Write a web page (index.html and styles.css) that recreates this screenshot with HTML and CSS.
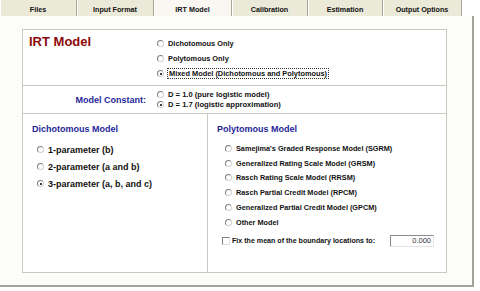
FILE: index.html
```html
<!DOCTYPE html>
<html lang="en">
<head>
    <meta charset="UTF-8">
    <title>IRT Model</title>
    <link rel="stylesheet" href="styles.css">
</head>
<body>
    <div class="tabs">
        <div class="tab">Files</div>
        <div class="tab">Input Format</div>
        <div class="tab active">IRT Model</div>
        <div class="tab">Calibration</div>
        <div class="tab">Estimation</div>
        <div class="tab">Output Options</div>
    </div>

    <div class="page">
        <div class="panel">
            <!-- model type -->
            <div class="sec-model">
                <div class="title">IRT Model</div>
                <div class="opts">
                    <div class="opt"><span class="radio"></span>Dichotomous Only</div>
                    <div class="opt"><span class="radio"></span>Polytomous Only</div>
                    <div class="opt"><span class="radio on"></span><span class="focus">Mixed Model (Dichotomous and Polytomous)</span></div>
                </div>
            </div>

            <!-- model constant -->
            <div class="sec-const">
                <div class="const-label">Model Constant:</div>
                <div class="opts">
                    <div class="opt"><span class="radio"></span>D = 1.0 (pure logistic model)</div>
                    <div class="opt"><span class="radio on"></span>D = 1.7 (logistic approximation)</div>
                </div>
            </div>

            <div class="sec-split">
                <div class="col-left">
                    <div class="head">Dichotomous Model</div>
                    <div class="list">
                        <div class="opt"><span class="radio"></span>1-parameter (b)</div>
                        <div class="opt"><span class="radio"></span>2-parameter (a and b)</div>
                        <div class="opt"><span class="radio on"></span>3-parameter (a, b, and c)</div>
                    </div>
                </div>
                <div class="col-right">
                    <div class="head">Polytomous Model</div>
                    <div class="list">
                        <div class="opt"><span class="radio"></span>Samejima's Graded Response Model (SGRM)</div>
                        <div class="opt"><span class="radio"></span>Generalized Rating Scale Model (GRSM)</div>
                        <div class="opt"><span class="radio"></span>Rasch Rating Scale Model (RRSM)</div>
                        <div class="opt"><span class="radio"></span>Rasch Partial Credit Model (RPCM)</div>
                        <div class="opt"><span class="radio"></span>Generalized Partial Credit Model (GPCM)</div>
                        <div class="opt"><span class="radio"></span>Other Model</div>
                    </div>
                    <div class="fix">
                        <span class="check"></span>Fix the mean of the boundary locations to:
                        <div class="field">0.000</div>
                    </div>
                </div>
            </div>
        </div>
    </div>
</body>
</html>
```

FILE: styles.css
```css
* {
    box-sizing: border-box;
}
body {
    margin: 0;
    width: 480px;
    height: 291px;
    overflow: hidden;
    background: #fff;
    font-family: "Liberation Sans", Arial, sans-serif;
    font-weight: bold;
    color: #111;
}
.tabs {
    display: grid;
    grid-template-columns: 77px 77px 78px 76px 75px 79px;
    height: 16px;
}
.tab {
    background: #ebe9d8;
    border-right: 1px solid #a8a694;
    box-shadow: inset 1px 0 0 #fff;
    font-size: 7.2px;
    display: flex;
    align-items: center;
    justify-content: center;
    padding-top: 2px;
}
.tab.active {
    background: #f8f7f1;
}
.page {
    width: 474px;
    height: 271px;
    border-right: 2px solid #a3a39b;
    border-bottom: 2px solid #a3a39b;
    background: #fcfcf8;
    padding: 13px 0 0 22px;
}
.panel {
    width: 425px;
    height: 244px;
    border: 1px solid #c9c9c1;
    background: #fff;
    display: flex;
    flex-direction: column;
}
.sec-model {
    display: flex;
    height: 56px;
    border-bottom: 1px solid #c9c9c1;
}
.title {
    width: 134px;
    padding: 4px 0 0 6px;
    font-size: 13px;
    line-height: 15px;
    color: #8c0a0a;
}
.sec-model .opts {
    padding-top: 6px;
}
.opt {
    display: flex;
    align-items: center;
    height: 15px;
    font-size: 7.4px;
    white-space: nowrap;
}
.radio {
    width: 7px;
    height: 7px;
    flex: none;
    border-radius: 50%;
    border: 1px solid;
    border-color: #7f7f7f #d2d2d2 #d2d2d2 #7f7f7f;
    background: #fff;
    margin-right: 4px;
    display: flex;
    align-items: center;
    justify-content: center;
}
.radio.on::after {
    content: '';
    width: 2px;
    height: 2px;
    border-radius: 50%;
    background: #000;
}
.focus {
    outline: 1px dotted #333;
    padding: 0 1px;
    line-height: 9px;
}
.sec-const {
    display: flex;
    align-items: center;
    height: 28px;
    border-bottom: 1px solid #c9c9c1;
}
.const-label {
    width: 134px;
    text-align: right;
    padding-right: 11px;
    font-size: 9px;
    color: #1f1f99;
}
.sec-const .opt {
    height: 10px;
    font-size: 7.6px;
}
.sec-split {
    display: flex;
    flex: 1;
}
.col-left {
    width: 185px;
    border-right: 1px solid #c9c9c1;
    padding: 9px 0 0 9px;
}
.col-right {
    flex: 1;
    padding: 9px 12px 0 9px;
}
.head {
    font-size: 9px;
    line-height: 12px;
    color: #1f1f99;
}
.list {
    margin-top: 6px;
}
.col-left .list {
    padding-left: 5px;
}
.col-left .opt {
    height: 17px;
    font-size: 9px;
}
.col-right .list {
    padding-left: 8px;
}
.col-right .opt {
    height: 14.8px;
    font-size: 7.3px;
}
.fix {
    display: flex;
    align-items: center;
    height: 15px;
    margin-top: 4px;
    padding-left: 5px;
    font-size: 7.1px;
    white-space: nowrap;
}
.check {
    width: 8px;
    height: 8px;
    flex: none;
    border: 1px solid;
    border-color: #808080 #e0e0e0 #e0e0e0 #808080;
    background: #fff;
    margin-right: 2px;
}
.field {
    margin-left: auto;
    width: 44px;
    height: 12px;
    border: 1px solid;
    border-color: #8a8a8a #e4e4e4 #e4e4e4 #8a8a8a;
    font-weight: normal;
    font-size: 7.5px;
    line-height: 10px;
    text-align: right;
    padding-right: 2px;
    color: #333;
}
```
